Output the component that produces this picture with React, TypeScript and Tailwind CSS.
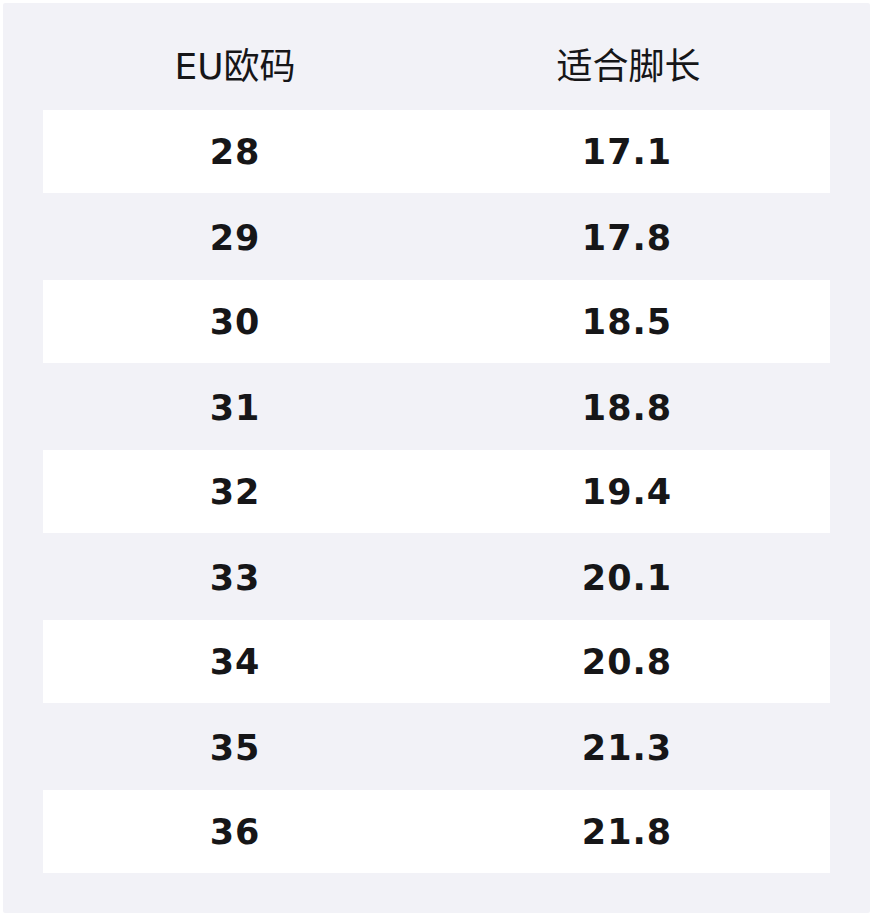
export default function App() {
  const sizes = [
    { eu: '28', foot: '17.1' },
    { eu: '29', foot: '17.8' },
    { eu: '30', foot: '18.5' },
    { eu: '31', foot: '18.8' },
    { eu: '32', foot: '19.4' },
    { eu: '33', foot: '20.1' },
    { eu: '34', foot: '20.8' },
    { eu: '35', foot: '21.3' },
    { eu: '36', foot: '21.8' },
  ]

  return (
    <main
      className="w-[874px] h-[918px] bg-white p-[3px] pr-[4px] pb-[5px] text-[#161618]"
      style={{ fontFamily: '"DejaVu Sans", "Noto Sans CJK SC", sans-serif' }}
    >
      <div className="h-full bg-[#f2f2f7] rounded-[2px] px-10 pt-10">
        <div className="grid grid-cols-[384px_1fr] h-[67px] pt-[6px] text-[36px] leading-[36px]">
          <div className="text-center">EU欧码</div>
          <div className="text-center">适合脚长</div>
        </div>
        <div>
          {sizes.map((row, idx) => (
            <div
              key={row.eu}
              className={
                idx % 2 === 0
                  ? 'grid grid-cols-[384px_1fr] items-center h-[85px] bg-white border-b-2 border-[#f2f2f7]'
                  : 'grid grid-cols-[384px_1fr] items-center h-[85px]'
              }
            >
              <div className="text-center text-[35px] font-bold leading-[40px] tracking-[1px]">{row.eu}</div>
              <div className="text-center text-[35px] font-bold leading-[40px] tracking-[1px] pr-[3px]">{row.foot}</div>
            </div>
          ))}
        </div>
      </div>
    </main>
  )
}
